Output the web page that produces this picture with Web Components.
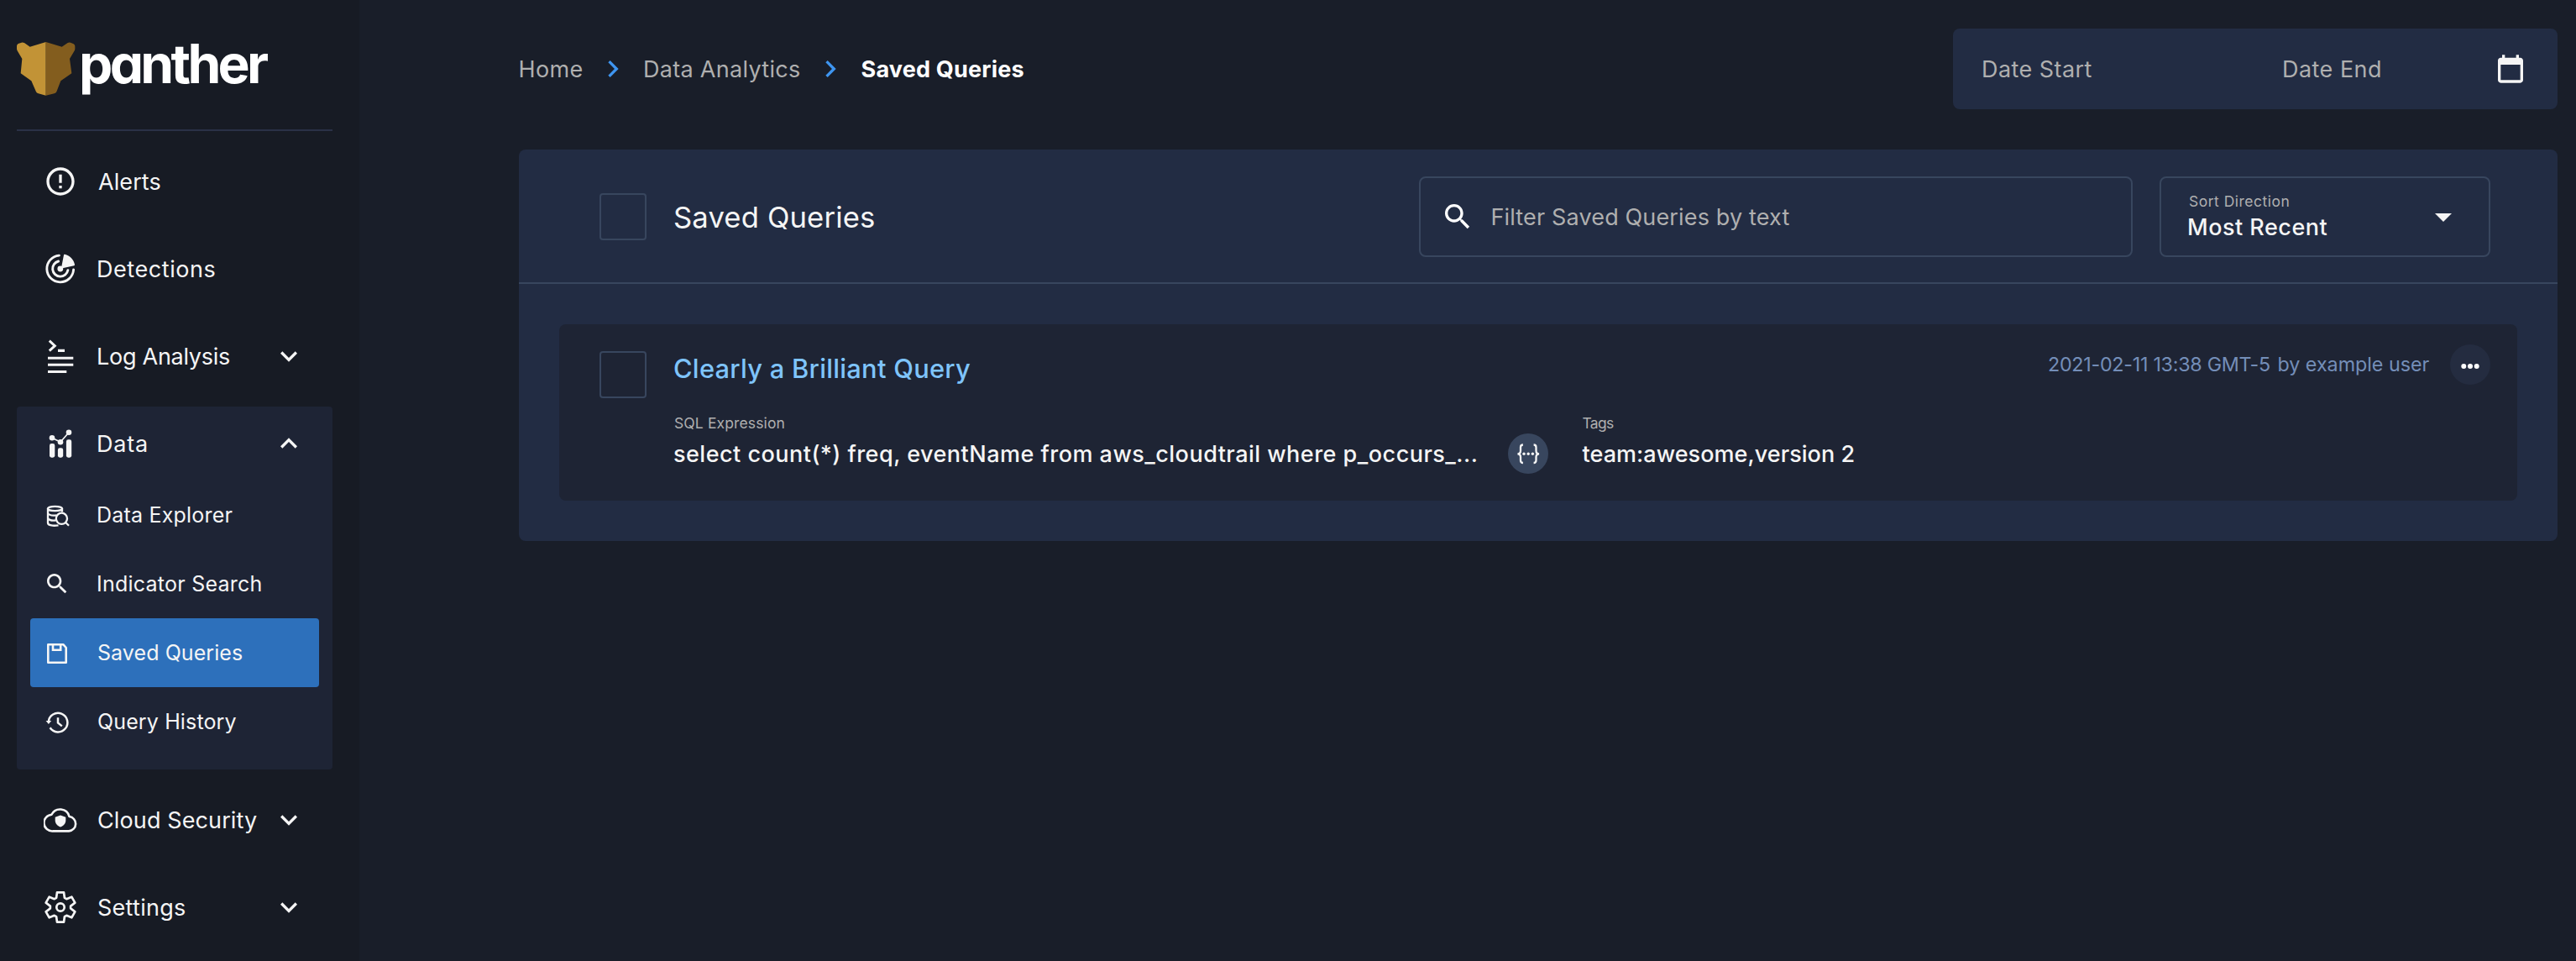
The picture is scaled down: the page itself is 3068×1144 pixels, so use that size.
<!DOCTYPE html>
<html lang="en">
<head>
<meta charset="utf-8">
<title>Saved Queries</title>
<style>
  html, body { margin: 0; height: 100%; }
  body { background: #191e29; color: #f5f5f5; font: 400 27px/1 Inter, "Open Sans", sans-serif; overflow: hidden; }
</style>
</head>
<body>
<panther-app></panther-app>
<script>
const define = (name, html, setup) => customElements.define(name, class extends HTMLElement {
  connectedCallback() {
    if (this.shadowRoot) return;
    const root = this.attachShadow({ mode: 'open' });
    root.innerHTML = typeof html === 'function' ? html(this) : html;
    if (setup) setup(this, root);
  }
});

/* gear outline with six teeth */
const gear = (() => {
  const tooth = [[-4.9, -11.2], [-4, -17.7], [4, -17.7], [4.9, -11.2]];
  const pts = [];
  for (let k = 0; k < 6; k++) {
    const a = k * Math.PI / 3, c = Math.cos(a), s = Math.sin(a);
    for (const [x, y] of tooth) pts.push((20 + x * c - y * s).toFixed(2) + ' ' + (20 + x * s + y * c).toFixed(2));
  }
  return 'M' + pts.join('L') + 'Z';
})();

const line = (w, body) => `<g fill="none" stroke="currentColor" stroke-width="${w}">${body}</g>`;
const icons = {
  alert: [24, '<path d="M11 15h2v2h-2zm0-8h2v6h-2zm.99-5C6.47 2 2 6.48 2 12s4.47 10 9.99 10C17.52 22 22 17.52 22 12S17.52 2 11.99 2zM12 20c-4.42 0-8-3.58-8-8s3.58-8 8-8 8 3.58 8 8-3.58 8-8 8z"/>'],
  detections: [40, line(2.9, '<path d="M18.4 4.1A15.9 15.9 0 1 0 35.6 21" stroke-linecap="round"/><path d="M17.6 11A9.2 9.2 0 1 0 28.9 21.6" stroke-linecap="round"/>') + '<circle cx="19.8" cy="20" r="3.4"/><path d="M24 3.4q.2-1 1.2-.6C31.500 4.500 35.800 9 37 15q.2 1-.8 1.200L22.500 19.200 21.200 18z"/>'],
  log: [40, line(3, '<path d="M6.800 1.700L13.300 7.700 6.800 13.700"/>') + '<path d="M17 11.700h8v3.200h-8zM5 20.700h30.300v3H5zM5 28.700h30.300v3H5zM5 36.900h22.300v3H5z"/>'],
  data: [40, '<rect x="7" y="20" width="6.300" height="16.700" rx="2.400"/><rect x="16.900" y="25.300" width="6.300" height="11.400" rx="2.400"/><rect x="26.900" y="15.300" width="6.300" height="21.400" rx="2.400"/><circle cx="10" cy="13.300" r="3.300"/><circle cx="20" cy="18.300" r="3.300"/><circle cx="30" cy="6.700" r="3.300"/>' + line(1.7, '<path d="M10 13.300L20 18.300 30 6.700"/>')],
  explorer: [32, line(2.3, '<ellipse cx="13.500" cy="8.500" rx="8.600" ry="2.700"/><path d="M5 8.500V25.500C5 28.800 12 29.200 17.500 28.300M22 8.500V12.500M5 14C6.500 16.400 11 16.900 15.500 16.300M5 20C6.500 22.300 10 22.900 14.500 22.400"/><circle cx="21.400" cy="20.300" r="6.600"/><path d="M26.200 25L30 28.800"/>')],
  search: [24, '<path d="M15.500 14h-.79l-.28-.27C15.410 12.590 16 11.110 16 9.500 16 5.910 13.090 3 9.500 3S3 5.910 3 9.500 5.910 16 9.500 16c1.610 0 3.090-.59 4.230-1.570l.27.280v.79l5 4.990L20.490 19l-4.990-5zm-6 0C7.010 14 5 11.990 5 9.500S7.010 5 9.500 5 14 7.010 14 9.500 11.990 14 9.500 14z"/>'],
  save: [32, line(2.600, '<path d="M5.300 6.300H23.500L26.700 10V27.700H5.300Z" stroke-linejoin="round"/><path d="M11 6.300V12.700H20.200V6.300"/>')],
  history: [32, line(2.500, '<path d="M5.800 16.300A11.300 11.300 0 1 1 7.600 23.300"/><path d="M17 11.200V17.500L21.800 21.400"/>') + '<path d="M2.600 15H9.200L5.900 18.900Z"/>'],
  cloud: [40, line(2.600, '<path d="M11 33.400A9.800 9.800 0 0 1 9.400 13.800A11.300 11.300 0 0 1 30.500 16A8.750 8.750 0 0 1 30 33.400Z" stroke-linejoin="round"/>') + '<path d="M20 14.500L26.300 16.800V20.500C26.300 24.300 23.500 27.300 20 28.500C16.500 27.300 13.700 24.300 13.700 20.500V16.800Z"/>'],
  gear: [40, line(2.700, `<path d="${gear}" stroke-linejoin="round"/><circle cx="20" cy="20" r="4.700"/>`)],
  down: [24, '<path d="M16.590 8.590L12 13.170 7.410 8.590 6 10l6 6 6-6z"/>'],
  up: [24, '<path d="M12 8l-6 6 1.410 1.410L12 10.830l4.590 4.580L18 14z"/>'],
  right: [24, '<path d="M10 6L8.590 7.410 13.170 12l-4.580 4.590L10 18l6-6z"/>'],
  calendar: [24, '<path d="M19 4h-1V2h-2v2H8V2H6v2H5c-1.110 0-2 .9-2 2v14c0 1.100.89 2 2 2h14c1.100 0 2-.9 2-2V6c0-1.100-.9-2-2-2zm0 16H5V9h14v11z"/>'],
  caret: [24, '<path d="M7 10l5 5 5-5z"/>'],
  code: [48, line(2.300, '<path d="M17.900 13.500C15.500 13.500 15 14.500 15 16.500V20.500C15 23 14 24.300 11.400 24.300C14 24.300 15 25.600 15 28.100V32C15 34 15.500 35 17.900 35"/><path d="M30.600 13.500C33 13.500 33.500 14.500 33.500 16.500V20.500C33.500 23 34.500 24.300 37.100 24.300C34.500 24.300 33.500 25.600 33.500 28.100V32C33.500 34 33 35 30.600 35"/>') + '<circle cx="19" cy="24.300" r="1.700"/><circle cx="24.200" cy="24.300" r="1.700"/><circle cx="29.400" cy="24.300" r="1.700"/>'],
  more: [48, '<circle cx="16.300" cy="26" r="3"/><circle cx="24" cy="26" r="3"/><circle cx="31.700" cy="26" r="3"/>']
};

define('p-icon', el => {
  const [box, body] = icons[el.getAttribute('name')], s = el.getAttribute('size') || 40;
  return `<style>:host{display:block;flex:none;width:${s}px;height:${s}px}svg{display:block}</style>
    <svg width="${s}" height="${s}" viewBox="0 0 ${box} ${box}" fill="currentColor">${body}</svg>`;
});

/* one line of text, tracked so that its ink fills the given width exactly */
const pen = document.createElement('canvas').getContext('2d');
define('p-text', '<style>:host{display:block;flex:none;white-space:pre;line-height:1.2}span{display:inline-block}</style><span><slot></slot></span>', (el, root) => {
  const width = +el.getAttribute('width'), text = el.textContent, cs = getComputedStyle(el);
  pen.font = `${cs.fontWeight} ${cs.fontSize} ${cs.fontFamily}`;
  const m = pen.measureText(text);
  const ink = m.actualBoundingBoxRight + m.actualBoundingBoxLeft;
  const span = root.querySelector('span');
  el.style.width = width + 'px';
  span.style.letterSpacing = ((width - ink) / (text.length - 1)).toFixed(3) + 'px';
  span.style.marginLeft = m.actualBoundingBoxLeft.toFixed(2) + 'px';
});

define('p-checkbox', '<style>:host{display:block;flex:none;box-sizing:border-box;width:56px;height:56px;border:2px solid #38465e;border-radius:4px}</style>');

define('p-logo', `<style>
  :host{display:flex;height:64px;align-items:flex-start;gap:8px}
  svg{display:block;flex:none}
  p-text{font-size:64px;font-weight:700;color:#fff;font-feature-settings:"cv11";line-height:64px;margin-top:-6px}
  </style>
  <svg width="70" height="64" viewBox="0 0 210 192">
    <path fill="#c29336" d="M104 0L47 17 28 4Q22 1 17 2L5 6Q0 9 0 14V25Q0 29 3 33L19 60 14 112 52 139 69 178Q71 183 77 184L104 191Z"/>
    <path fill="#835d1e" d="M104 0L161 17 182 3Q187 0 192 2L203 7Q208 10 208 15V25Q208 29 205 33L189 60 196 112 157 139 142 178Q140 183 134 184L104 191Z"/>
  </svg><p-text width="218.500">panther</p-text>`);

define('nav-item', el => `<style>
  :host{display:flex;align-items:center;box-sizing:border-box;height:88px;padding:0 32px;color:#f5f5f5}
  :host([sub]){height:82px;margin:0 16px;padding:0 16px;font-size:25px;border-radius:4px}
  :host([active]){background:#2d70bb}
  .label{flex:1;padding:1.500px 0 0 25px}
  :host([sub]) .label{padding:0 0 0 33px}
  </style><p-icon name="${el.getAttribute('icon')}" size="${el.hasAttribute('sub') ? 32 : 40}"></p-icon>
  <div class="label"><slot></slot></div>${el.hasAttribute('toggle') ? `<p-icon name="${el.getAttribute('toggle')}"></p-icon>` : ''}`);

define('nav-group', '<style>:host{display:block;background:#1e2435;border-radius:4px;padding-bottom:16px}</style><slot></slot>');

define('side-bar', `<style>
  :host{display:block;flex:none;box-sizing:border-box;width:428px;height:100%;padding:50px 32px 0 20px;background:#171b24}
  hr{margin:40px 0 16px;border:0;height:2px;background:#2a3147}
  nav{display:flex;flex-direction:column;gap:16px}
  </style>
  <p-logo></p-logo><hr>
  <nav>
    <nav-item icon="alert"><p-text width="73.500">Alerts</p-text></nav-item>
    <nav-item icon="detections"><p-text width="138.500">Detections</p-text></nav-item>
    <nav-item icon="log" toggle="down"><p-text width="156">Log Analysis</p-text></nav-item>
    <nav-group>
      <nav-item icon="data" toggle="up"><p-text width="58">Data</p-text></nav-item>
      <nav-item sub icon="explorer"><p-text width="159.500">Data Explorer</p-text></nav-item>
      <nav-item sub icon="search"><p-text width="193.500">Indicator Search</p-text></nav-item>
      <nav-item sub active icon="save"><p-text width="171">Saved Queries</p-text></nav-item>
      <nav-item sub icon="history"><p-text width="164.500">Query History</p-text></nav-item>
    </nav-group>
    <nav-item icon="cloud" toggle="down"><p-text width="189">Cloud Security</p-text></nav-item>
    <nav-item icon="gear" toggle="down"><p-text width="103">Settings</p-text></nav-item>
  </nav>`);

define('bread-crumbs', `<style>
  :host{display:flex;align-items:center;color:#afafaf;padding-left:1.500px}
  p-text{padding-top:1.500px}
  p-icon{color:#3e95f0;margin:0 18px 0 16.500px}
  .here{font-weight:700;color:#fff}
  </style>
  <p-text width="74">Home</p-text><p-icon name="right"></p-icon>
  <p-text width="184">Data Analytics</p-text><p-icon name="right"></p-icon>
  <p-text class="here" width="193">Saved Queries</p-text>`);

define('date-range', `<style>
  :host{display:flex;align-items:center;box-sizing:border-box;width:720px;height:96px;padding:0 36px;border-radius:8px;background:#222c43;color:#afafaf}
  p-text{margin-right:228.500px;padding-top:2px}
  p-text + p-text{margin-right:auto}
  p-icon{color:#f5f5f5}
  </style>
  <p-text width="129.500">Date Start</p-text><p-text width="115">Date End</p-text><p-icon name="calendar"></p-icon>`);

define('search-field', `<style>
  :host{display:flex;align-items:center;box-sizing:border-box;width:850px;height:96px;padding-left:24px;gap:21.500px;border:2px solid #38465e;border-radius:8px;color:#afafaf}
  p-icon{color:#fff}
  p-text{padding-top:2px}
  </style><p-icon name="search"></p-icon><p-text width="354">Filter Saved Queries by text</p-text>`);

define('sort-select', `<style>
  :host{display:flex;align-items:center;justify-content:space-between;box-sizing:border-box;width:394px;height:96px;padding:0 30px 0 33px;border:2px solid #38465e;border-radius:8px}
  .lines{display:flex;flex-direction:column;gap:5px}
  .label{font-size:17.500px;color:#afafaf}
  .value{font-weight:500}
  </style>
  <div class="lines"><p-text class="label" width="118.500">Sort Direction</p-text><p-text class="value" width="164.500">Most Recent</p-text></div>
  <p-icon name="caret" size="48"></p-icon>`);

define('icon-disc', el => `<style>
  :host{display:block;flex:none;width:48px;height:48px;border-radius:50%;background:#38465e;color:#f5f5f5}
  :host([quiet]){background:#242c40;color:#fff}
  </style><p-icon name="${el.getAttribute('icon')}" size="48"></p-icon>`);

define('query-field', '<style>:host{display:flex;flex-direction:column;gap:11px;margin-top:-1px}::slotted([slot=label]){font-size:17.500px;color:#afafaf}::slotted([slot=value]){font-weight:500}</style><slot name="label"></slot><slot name="value"></slot>');

define('query-card', `<style>
  :host{display:flex;align-items:flex-start;box-sizing:border-box;height:210px;padding:32px 32px 0 48px;border-radius:8px;background:#1e2434}
  .body{flex:1;padding-left:33px}
  .top{display:flex;align-items:flex-start;justify-content:space-between;height:76px}
  .title{font-size:30.800px;font-weight:500;color:#7fc4fb;margin-top:2.500px}
  .meta{display:flex;align-items:center;font-size:23.300px;color:#748eb8;margin-top:-8px}
  .meta p-text + p-text{margin:0 24.500px 0 10.500px}
  .fields{display:flex;align-items:flex-start}
  icon-disc.code{margin:22px 40.500px 0 37px}
  </style>
  <p-checkbox></p-checkbox>
  <div class="body">
    <div class="top">
      <p-text class="title" width="353">Clearly a Brilliant Query</p-text>
      <div class="meta"><p-text width="263">2021-02-11 13:38 GMT-5</p-text><p-text width="180">by example user</p-text><icon-disc quiet icon="more"></icon-disc></div>
    </div>
    <div class="fields">
      <query-field><p-text slot="label" width="130.500">SQL Expression</p-text><p-text slot="value" width="956">select count(*) freq, eventName from aws_cloudtrail where p_occurs_...</p-text></query-field>
      <icon-disc class="code" icon="code"></icon-disc>
      <query-field><p-text slot="label" width="37.500">Tags</p-text><p-text slot="value" width="323">team:awesome,version 2</p-text></query-field>
    </div>
  </div>`);

define('query-panel', `<style>
  :host{display:block;border-radius:8px;background:#222c43}
  header{display:flex;align-items:center;box-sizing:border-box;height:160px;padding:2px 80px 0 96px;border-bottom:2px solid #38465e}
  h1{flex:1;margin:0 0 0 33px;padding-top:1px;font-size:34.600px;font-weight:400}
  sort-select{margin-left:32px}
  .list{padding:48px}
  </style>
  <header><p-checkbox></p-checkbox><h1><p-text width="238">Saved Queries</p-text></h1><search-field></search-field><sort-select></sort-select></header>
  <div class="list"><slot></slot></div>`);

define('panther-app', `<style>
  :host{display:flex;height:100vh}
  main{flex:1;padding:34px 22px 0 190px}
  .bar{display:flex;align-items:center;justify-content:space-between;margin-bottom:48px}
  </style>
  <side-bar></side-bar>
  <main>
    <div class="bar"><bread-crumbs></bread-crumbs><date-range></date-range></div>
    <query-panel><query-card></query-card></query-panel>
  </main>`);
</script>
</body>
</html>
